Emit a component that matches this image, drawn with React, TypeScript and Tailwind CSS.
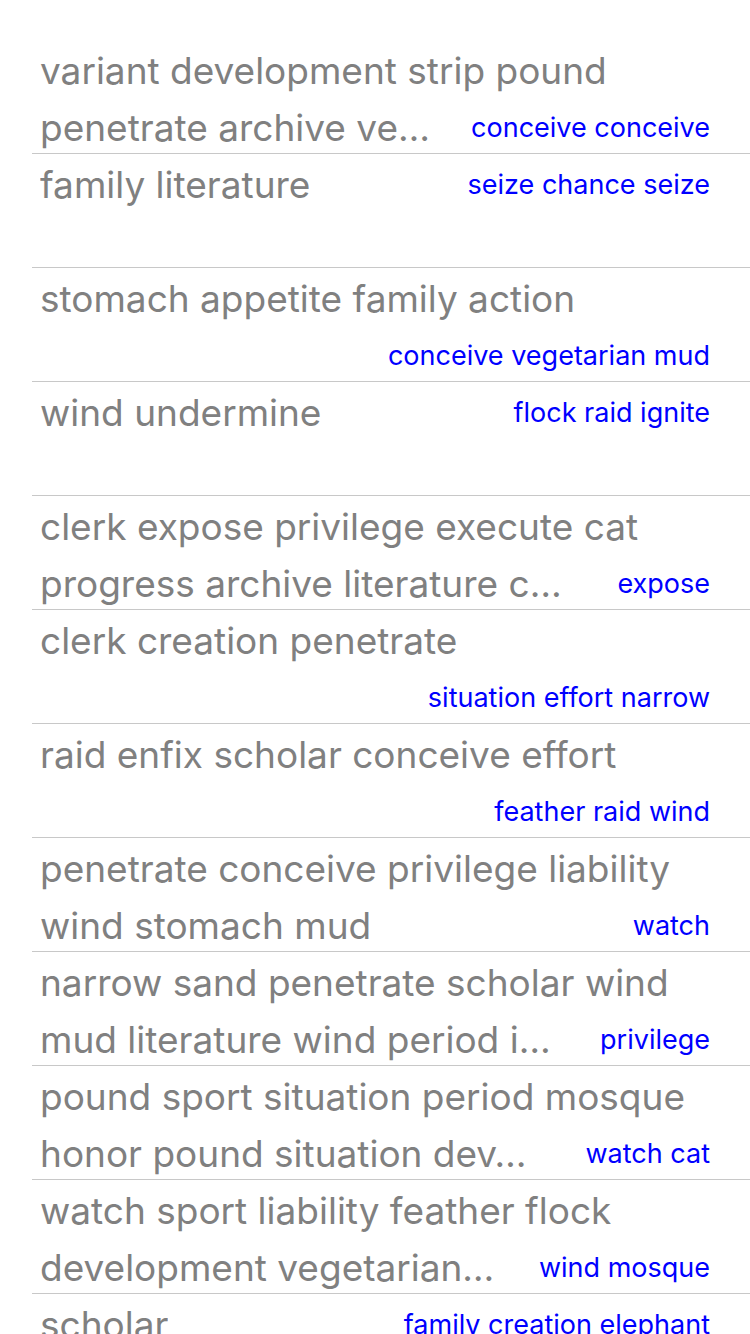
type Row = { lines: string[]; blue: string; blueLine: number };

const rows: Row[] = [
  { lines: ['variant development strip pound', 'penetrate archive ve…'], blue: 'conceive conceive', blueLine: 1 },
  { lines: ['family literature'], blue: 'seize chance seize', blueLine: 0 },
  { lines: ['stomach appetite family action'], blue: 'conceive vegetarian mud', blueLine: 1 },
  { lines: ['wind undermine'], blue: 'flock raid ignite', blueLine: 0 },
  { lines: ['clerk expose privilege execute cat', 'progress archive literature c…'], blue: 'expose', blueLine: 1 },
  { lines: ['clerk creation penetrate'], blue: 'situation effort narrow', blueLine: 1 },
  { lines: ['raid enfix scholar conceive effort'], blue: 'feather raid wind', blueLine: 1 },
  { lines: ['penetrate conceive privilege liability', 'wind stomach mud'], blue: 'watch', blueLine: 1 },
  { lines: ['narrow sand penetrate scholar wind', 'mud literature wind period i…'], blue: 'privilege', blueLine: 1 },
  { lines: ['pound sport situation period mosque', 'honor pound situation dev…'], blue: 'watch cat', blueLine: 1 },
  { lines: ['watch sport liability feather flock', 'development vegetarian…'], blue: 'wind mosque', blueLine: 1 },
  { lines: ['scholar'], blue: 'family creation elephant', blueLine: 0 },
];

function ListRow({ row }: { row: Row }) {
  return (
    <div className="ml-8 h-[114px] overflow-hidden border-b border-[#c8c8c8] pl-2 pr-10 pt-[2px]">
      {[0, 1].map((i) => (
        <div key={i} className="flex h-[57px] justify-between">
          <span className="truncate text-[37px] leading-[57px] text-[#808080]">{row.lines[i] ?? ''}</span>
          {row.blueLine === i && (
            <span className="ml-4 shrink-0 text-[27px] leading-[57px] text-[#0000ff]">{row.blue}</span>
          )}
        </div>
      ))}
    </div>
  );
}

export default function App() {
  return (
    <div
      className="h-[1334px] w-[750px] overflow-hidden bg-white pt-[40px]"
      style={{ fontFamily: 'Inter, "Noto Sans", sans-serif' }}
    >
      {rows.map((row, i) => (
        <ListRow key={i} row={row} />
      ))}
    </div>
  );
}
